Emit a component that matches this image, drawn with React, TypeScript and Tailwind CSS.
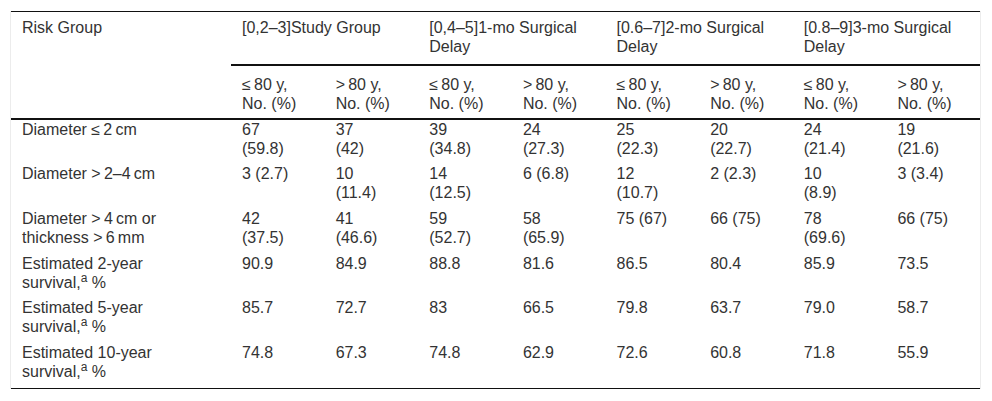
import React from "react";

type Cell = string[];

const surv = (
  <>
    survival,<sup>a</sup> %
  </>
);

const groups = [
  { lines: ["[0,2–3]Study Group"] },
  { lines: ["[0,4–5]1-mo Surgical", "Delay"] },
  { lines: ["[0.6–7]2-mo Surgical", "Delay"] },
  { lines: ["[0.8–9]3-mo Surgical", "Delay"] },
];

const rows: { label: React.ReactNode; cells: Cell[] }[] = [
  {
    label: <>Diameter ≤{"\u2009"}2{"\u2009"}cm</>,
    cells: [
      ["67", "(59.8)"],
      ["37", "(42)"],
      ["39", "(34.8)"],
      ["24", "(27.3)"],
      ["25", "(22.3)"],
      ["20", "(22.7)"],
      ["24", "(21.4)"],
      ["19", "(21.6)"],
    ],
  },
  {
    label: <>Diameter &gt;{"\u2009"}2–4{"\u2009"}cm</>,
    cells: [
      ["3 (2.7)"],
      ["10", "(11.4)"],
      ["14", "(12.5)"],
      ["6 (6.8)"],
      ["12", "(10.7)"],
      ["2 (2.3)"],
      ["10", "(8.9)"],
      ["3 (3.4)"],
    ],
  },
  {
    label: (
      <>
        Diameter &gt;{"\u2009"}4{"\u2009"}cm or
        <br />
        thickness &gt;{"\u2009"}6{"\u2009"}mm
      </>
    ),
    cells: [
      ["42", "(37.5)"],
      ["41", "(46.6)"],
      ["59", "(52.7)"],
      ["58", "(65.9)"],
      ["75 (67)"],
      ["66 (75)"],
      ["78", "(69.6)"],
      ["66 (75)"],
    ],
  },
  {
    label: (
      <>
        Estimated 2-year
        <br />
        {surv}
      </>
    ),
    cells: [["90.9"], ["84.9"], ["88.8"], ["81.6"], ["86.5"], ["80.4"], ["85.9"], ["73.5"]],
  },
  {
    label: (
      <>
        Estimated 5-year
        <br />
        {surv}
      </>
    ),
    cells: [["85.7"], ["72.7"], ["83"], ["66.5"], ["79.8"], ["63.7"], ["79.0"], ["58.7"]],
  },
  {
    label: (
      <>
        Estimated 10-year
        <br />
        {surv}
      </>
    ),
    cells: [["74.8"], ["67.3"], ["74.8"], ["62.9"], ["72.6"], ["60.8"], ["71.8"], ["55.9"]],
  },
];

const subHeads = Array.from({ length: 8 }, (_, i) =>
  i % 2 === 0 ? ["≤\u200980 y,", "No. (%)"] : [">\u200980 y,", "No. (%)"]
);

export default function App() {
  return (
    <div className="w-[992px] h-[401px] bg-white pt-[11px] pl-[10px] font-['Liberation_Sans',Arial,sans-serif] text-[16px] leading-[19px] text-[#333]">
      <div className="w-[971px] border-x border-[#ececec]">
        <table className="w-[969px] table-fixed border-collapse border-t border-b border-[#111]">
          <colgroup>
            <col className="w-[220px]" />
            <col />
            <col />
            <col />
            <col />
            <col />
            <col />
            <col />
            <col />
          </colgroup>
          <thead>
            <tr>
              <th
                rowSpan={2}
                className="align-top text-left font-normal pl-[11px] pt-[6px] border-b-2 border-[#111]"
              >
                Risk Group
              </th>
              {groups.map((g, i) => (
                <th
                  key={i}
                  colSpan={2}
                  className="align-top text-left font-normal pl-[11px] pt-[6px] pb-[7px] h-[53px] border-b-2 border-[#111]"
                >
                  {g.lines.map((l, j) => (
                    <div key={j} className="whitespace-nowrap">
                      {l}
                    </div>
                  ))}
                </th>
              ))}
            </tr>
            <tr>
              {subHeads.map((s, i) => (
                <th
                  key={i}
                  className="align-top text-left font-normal pl-[11px] pt-[9px] pb-[4px] h-[54px] border-b-2 border-[#111]"
                >
                  {s.map((l, j) => (
                    <div key={j} className="whitespace-nowrap">
                      {l}
                    </div>
                  ))}
                </th>
              ))}
            </tr>
          </thead>
          <tbody>
            {rows.map((r, i) => (
              <tr key={i}>
                <td className="align-top pl-[11px] pt-0 pb-[6.7px]">{r.label}</td>
                {r.cells.map((c, j) => (
                  <td key={j} className="align-top pl-[11px] pt-0 pb-[6.7px]">
                    {c.map((l, k) => (
                      <div key={k} className="whitespace-nowrap">
                        {l}
                      </div>
                    ))}
                  </td>
                ))}
              </tr>
            ))}
          </tbody>
        </table>
      </div>
    </div>
  );
}
